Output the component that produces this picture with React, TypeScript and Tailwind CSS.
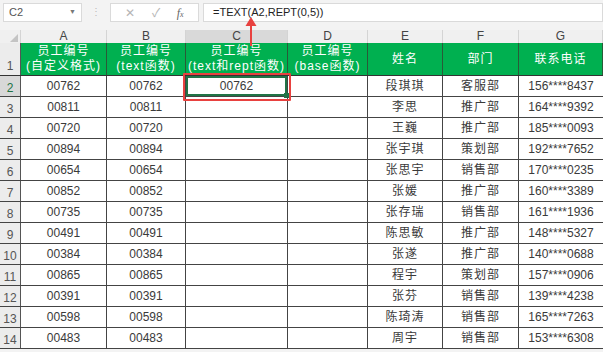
import React from 'react';

const cols = [
  { key: 'A', w: 'w-[86px]' },
  { key: 'B', w: 'w-[79px]' },
  { key: 'C', w: 'w-[102px]' },
  { key: 'D', w: 'w-[80px]' },
  { key: 'E', w: 'w-[75px]' },
  { key: 'F', w: 'w-[76px]' },
  { key: 'G', w: 'w-[84px]' },
];

const headers = [
  ['员工编号', '(自定义格式)'],
  ['员工编号', '(text函数)'],
  ['员工编号', '(text和rept函数)'],
  ['员工编号', '(base函数)'],
  ['姓名'],
  ['部门'],
  ['联系电话'],
];

const rows = [
  ['00762', '段琪琪', '客服部', '156****8437'],
  ['00811', '李思', '推广部', '164****9392'],
  ['00720', '王巍', '推广部', '185****0093'],
  ['00894', '张宇琪', '策划部', '192****7652'],
  ['00654', '张思宇', '销售部', '170****0235'],
  ['00852', '张媛', '推广部', '160****3389'],
  ['00735', '张存瑞', '销售部', '161****1936'],
  ['00491', '陈思敏', '推广部', '148****5327'],
  ['00384', '张遂', '推广部', '140****0688'],
  ['00865', '程宇', '策划部', '157****0906'],
  ['00391', '张芬', '销售部', '139****4238'],
  ['00598', '陈琦涛', '销售部', '165****7263'],
  ['00483', '周宇', '销售部', '153****6308'],
];

const font = "font-['Liberation_Sans','Noto_Sans_CJK_SC',sans-serif]";

export default function App() {
  return (
    <div className={`relative w-[603px] h-[352px] overflow-hidden bg-[#f3f3f3] ${font}`}>
      {/* formula bar */}
      <div className="flex h-[30px] items-start pt-[3px]">
        <div className="ml-[3px] flex h-[19px] w-[79px] items-center justify-between border border-[#dadada] bg-white px-[5px] text-[11px] text-[#555]">
          <span>C2</span>
          <span className="text-[7px] text-[#777]">▼</span>
        </div>
        <div className="flex w-[28px] justify-center pt-[3px] text-[10px] leading-[12px] text-[#bbb]">⋮</div>
        <div className="flex h-[19px] w-[89px] items-center justify-around border border-[#dadada] bg-white px-[6px] text-[12px] text-[#b5b5b5]">
          <span>✕</span>
          <span>✓</span>
          <span className="font-['Liberation_Serif',serif] italic text-[#666]">f<span className="text-[8px]">x</span></span>
        </div>
        <div className="ml-[4px] flex h-[19px] flex-1 items-center border border-[#dadada] bg-white pl-[9px] text-[11px] text-[#222]">
          =TEXT(A2,REPT(0,5))
        </div>
      </div>

      {/* column letters */}
      <div className="flex h-[13px] bg-[#f0f0f0] text-[12px] leading-[13px] text-[#444]">
        <div className="relative w-[21px] border-r border-[#d4d4d4]">
          <div className="absolute bottom-[1px] right-[2px] h-0 w-0 border-b-[8px] border-l-[8px] border-b-[#c4c4c4] border-l-transparent" />
        </div>
        {cols.map((c) => (
          <div
            key={c.key}
            className={`${c.w} border-r border-[#d4d4d4] text-center ${c.key === 'C' ? 'bg-[#d9d9d9]' : ''}`}
          >
            {c.key}
          </div>
        ))}
      </div>

      {/* header row */}
      <div className="flex h-[33px] border-b border-[#333]">
        <div className="flex w-[21px] items-end justify-center border-r border-[#555] bg-[#ececec] text-[12px] text-[#555]">
          1
        </div>
        {cols.map((c, i) => (
          <div
            key={c.key}
            className={`${c.w} flex flex-col items-center justify-center border-r border-[#2a5a38] bg-[#00b050] text-[12px] leading-[15px] tracking-[1px] text-white`}
          >
            {headers[i].map((t) => (
              <span key={t}>{t}</span>
            ))}
          </div>
        ))}
      </div>

      {/* data rows */}
      {rows.map((r, i) => (
        <div key={i} className="flex h-[21px] border-b border-[#444] bg-white text-[12px] text-[#3a3a3a]">
          <div
            className={`flex w-[21px] items-end justify-center border-r border-[#555] text-[12px] leading-[15px] ${
              i === 0 ? 'bg-[#d8d8d8] text-[#217346]' : 'bg-[#ececec] text-[#555]'
            }`}
          >
            {i + 2}
          </div>
          <div className="flex w-[86px] items-center justify-center border-r border-[#444]">{r[0]}</div>
          <div className="flex w-[79px] items-center justify-center border-r border-[#444]">{r[0]}</div>
          <div className="relative flex w-[102px] items-center justify-center border-r border-[#444]">
            {i === 0 && (
              <>
                <div className="absolute inset-[0px] border-2 border-[#217346]" />
                <div className="absolute -bottom-[2px] -right-[2px] h-[5px] w-[5px] bg-[#217346]" />
              </>
            )}
            <span className="relative">{i === 0 ? r[0] : ''}</span>
          </div>
          <div className="w-[80px] border-r border-[#444]" />
          <div className="flex w-[75px] items-center justify-center border-r border-[#444] tracking-[1px]">{r[1]}</div>
          <div className="flex w-[76px] items-center justify-center border-r border-[#444] tracking-[1px]">{r[2]}</div>
          <div className="flex w-[84px] items-center justify-center">{r[3]}</div>
        </div>
      ))}

      {/* red highlight box on C2 */}
      <div className="absolute left-[183px] top-[73px] h-[28px] w-[108px] rounded-[1px] border-2 border-[#e8413f]" />

      {/* arrow up to formula bar */}
      <svg className="absolute left-[243px] top-[16px]" width="16" height="30" viewBox="0 0 16 30">
        <line x1="8" y1="8" x2="8" y2="30" stroke="#e8413f" strokeWidth="2" />
        <polygon points="8,1 2.5,10 13.5,10" fill="#e8413f" />
      </svg>
    </div>
  );
}
